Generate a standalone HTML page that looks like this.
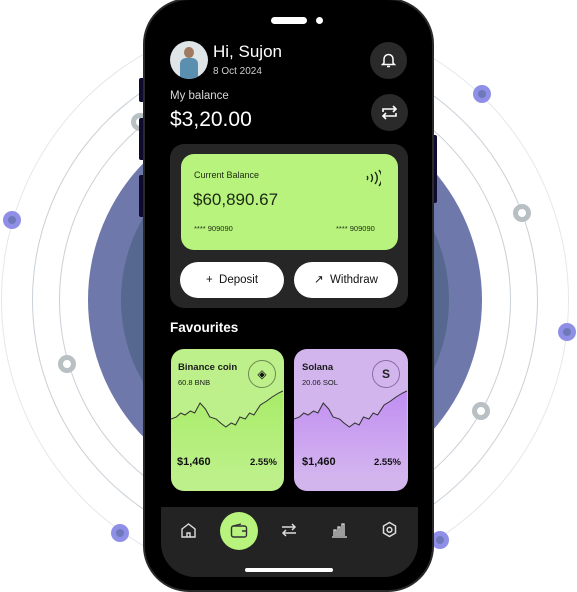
<!DOCTYPE html>
<html><head><style>
*{margin:0;padding:0;box-sizing:border-box}
body{width:577px;height:592px;overflow:hidden;background:#fff;position:relative;font-family:"Liberation Sans",sans-serif}
.a{position:absolute}
.ring{position:absolute;border-radius:50%;border:1px solid #c9d0d6}
.dot{position:absolute;width:18px;height:18px;border-radius:50%;background:#8f8fe8}
.dot::after{content:"";position:absolute;left:5px;top:5px;width:8px;height:8px;border-radius:50%;background:#6d79b8}
.gd{position:absolute;width:18px;height:18px;border-radius:50%;border:5px solid #b8c0c4;background:#fff}
.phone{position:absolute;left:143px;top:-2px;width:291px;height:594px;background:#000;border-radius:46px;border:2px solid #2a2a2a}
.w{color:#fff}
</style></head><body>
<div class="a" style="left:88px;top:103px;width:394px;height:394px;border-radius:50%;background:#6e78ab"></div>
<div class="a" style="left:121px;top:136px;width:328px;height:328px;border-radius:50%;background:#56688f"></div>
<div class="ring" style="left:59px;top:74px;width:452px;height:452px"></div>
<div class="ring" style="left:32px;top:47px;width:506px;height:506px"></div>
<div class="ring" style="left:1px;top:16px;width:568px;height:568px;border-color:#e4e8ea"></div>
<div class="dot" style="left:3px;top:211px"></div>
<div class="dot" style="left:111px;top:524px"></div>
<div class="dot" style="left:473px;top:85px"></div>
<div class="dot" style="left:558px;top:323px"></div>
<div class="dot" style="left:431px;top:531px"></div>
<div class="gd" style="left:131px;top:113px"></div>
<div class="gd" style="left:58px;top:355px"></div>
<div class="gd" style="left:513px;top:204px"></div>
<div class="gd" style="left:472px;top:402px"></div>
<div class="a" style="left:139px;top:78px;width:6px;height:24px;background:#0e0b2e;border-radius:2px"></div>
<div class="a" style="left:139px;top:118px;width:6px;height:42px;background:#0e0b2e;border-radius:2px"></div>
<div class="a" style="left:139px;top:175px;width:6px;height:42px;background:#0e0b2e;border-radius:2px"></div>
<div class="a" style="left:432px;top:135px;width:5px;height:68px;background:#0e0b2e;border-radius:2px"></div>
<div class="phone"></div>
<div class="a" style="left:271px;top:17px;width:36px;height:7px;border-radius:4px;background:#fff"></div>
<div class="a" style="left:316px;top:17px;width:7px;height:7px;border-radius:50%;background:#fff"></div>
<div class="a" style="left:170px;top:41px;width:38px;height:38px;border-radius:50%;background:#dfe4e6;overflow:hidden"><div class="a" style="left:10px;top:17px;width:18px;height:22px;background:#5a8fb0;border-radius:6px 6px 0 0"></div><div class="a" style="left:14px;top:6px;width:10px;height:11px;background:#a07a60;border-radius:50%"></div></div>
<div class="a w" style="left:213px;top:42px;font-size:17px">Hi, Sujon</div>
<div class="a" style="left:213px;top:66px;font-size:10px;color:#cfcfcf">8 Oct 2024</div>
<div class="a" style="left:370px;top:42px;width:37px;height:37px;border-radius:50%;background:#2a2a2a"><svg class="a" style="left:11px;top:10px" width="15" height="16" viewBox="0 0 15 16" fill="none" stroke="#fff" stroke-width="1.5"><path d="M3 11V7a4.5 4.5 0 0 1 9 0v4l1.5 1.5h-12z M6 14.5h3"/></svg></div>
<div class="a" style="left:371px;top:94px;width:37px;height:37px;border-radius:50%;background:#2a2a2a"><svg class="a" style="left:10px;top:11px" width="17" height="15" viewBox="0 0 17 15" fill="none" stroke="#fff" stroke-width="1.6"><path d="M2 7V4h13M12 1l3 3-3 3M15 8v3H2M5 14l-3-3 3-3"/></svg></div>
<div class="a" style="left:170px;top:90px;font-size:11.5px;color:#d8d8d8">My balance</div>
<div class="a w" style="left:170px;top:108px;font-size:21px">$3,20.00</div>
<div class="a" style="left:170px;top:144px;width:238px;height:164px;border-radius:14px;background:#262626"></div>
<div class="a" style="left:181px;top:154px;width:217px;height:96px;border-radius:13px;background:#b8f37e"></div>
<div class="a" style="left:194px;top:170px;font-size:9px;color:#1c2a10">Current Balance</div>
<div class="a" style="left:193px;top:190px;font-size:17px;color:#1c2a10">$60,890.67</div>
<div class="a" style="left:194px;top:224px;font-size:7.5px;color:#1c2a10">**** 909090</div>
<div class="a" style="left:336px;top:224px;font-size:7.5px;color:#1c2a10">**** 909090</div>
<svg class="a" style="left:365px;top:168px" width="16" height="20" viewBox="0 0 16 20" fill="none" stroke="#1c2a10" stroke-width="1.4"><path d="M2 8q1.5 2 0 4M6 6q3 4 0 8M10 4q4.5 6 0 12M14 2q6 8 0 16"/></svg>
<div class="a" style="left:180px;top:262px;width:104px;height:36px;border-radius:18px;background:#fff;font-size:11.5px;line-height:36px;text-align:center;color:#111">+&nbsp; Deposit</div>
<div class="a" style="left:294px;top:262px;width:104px;height:36px;border-radius:18px;background:#fff;font-size:11.5px;line-height:36px;text-align:center;color:#111">↗&nbsp; Withdraw</div>
<div class="a w" style="left:170px;top:320px;font-size:13.5px;font-weight:bold">Favourites</div>
<div class="a" style="left:171px;top:349px;width:113px;height:142px;border-radius:13px;background:#bdf08a;overflow:hidden">
<svg class="a" style="left:0;top:28px" width="113" height="114" viewBox="0 0 105 114" preserveAspectRatio="none"><defs><linearGradient id="g1" x1="0" y1="0" x2="0" y2="1"><stop offset="0" stop-color="#a8ec68"/><stop offset="1" stop-color="#bdf08a"/></linearGradient><linearGradient id="g2" x1="0" y1="0" x2="0" y2="1"><stop offset="0" stop-color="#c18ef2"/><stop offset="1" stop-color="#d3b5ee"/></linearGradient></defs><path d="M0 42l5-2 4-4 4 2 5-4 4 2 5-10 5 6 4 8 6 2 4 4 5 4 5-4 4 2 4-8 5 2 4-6 4 2 6-10 6-4 5-4 6-4 4-2v86H0z" fill="url(#g1)"/><path d="M0 42l5-2 4-4 4 2 5-4 4 2 5-10 5 6 4 8 6 2 4 4 5 4 5-4 4 2 4-8 5 2 4-6 4 2 6-10 6-4 5-4 6-4 4-2" fill="none" stroke="#333" stroke-width="1"/></svg>
<div class="a" style="left:7px;top:13px;font-size:9.5px;font-weight:bold;color:#1a1a1a">Binance coin</div>
<div class="a" style="left:7px;top:29px;font-size:7.5px;color:#1a1a1a">60.8 BNB</div>
<div class="a" style="left:77px;top:11px;width:28px;height:28px;border-radius:50%;border:1px solid #6b8a4e;text-align:center;line-height:27px;font-size:12px;color:#111">◈</div>
<div class="a" style="left:6px;top:107px;font-size:11px;font-weight:bold;color:#111">$1,460</div>
<div class="a" style="left:79px;top:108px;font-size:9.5px;font-weight:bold;color:#111">2.55%</div>
</div>
<div class="a" style="left:294px;top:349px;width:114px;height:142px;border-radius:13px;background:#d3b5ee;overflow:hidden">
<svg class="a" style="left:0;top:28px" width="114" height="114" viewBox="0 0 105 114" preserveAspectRatio="none"><path d="M0 42l5-2 4-4 4 2 5-4 4 2 5-10 5 6 4 8 6 2 4 4 5 4 5-4 4 2 4-8 5 2 4-6 4 2 6-10 6-4 5-4 6-4 4-2v86H0z" fill="url(#g2)"/><path d="M0 42l5-2 4-4 4 2 5-4 4 2 5-10 5 6 4 8 6 2 4 4 5 4 5-4 4 2 4-8 5 2 4-6 4 2 6-10 6-4 5-4 6-4 4-2" fill="none" stroke="#333" stroke-width="1"/></svg>
<div class="a" style="left:8px;top:13px;font-size:9.5px;font-weight:bold;color:#1a1a1a">Solana</div>
<div class="a" style="left:8px;top:29px;font-size:7.5px;color:#1a1a1a">20.06 SOL</div>
<div class="a" style="left:78px;top:11px;width:28px;height:28px;border-radius:50%;border:1px solid #8a6aa8;text-align:center;line-height:27px;font-size:12px;font-weight:bold;color:#222">S</div>
<div class="a" style="left:8px;top:107px;font-size:11px;font-weight:bold;color:#111">$1,460</div>
<div class="a" style="left:80px;top:108px;font-size:9.5px;font-weight:bold;color:#111">2.55%</div>
</div>
<div class="a" style="left:161px;top:507px;width:257px;height:70px;background:#232323;border-radius:0 0 34px 34px"></div>
<div class="a" style="left:220px;top:512px;width:38px;height:38px;border-radius:50%;background:#b8f37e"></div>
<svg class="a" style="left:180px;top:522px" width="17" height="17" viewBox="0 0 17 17" fill="none" stroke="#ddd" stroke-width="1.4"><path d="M2 7l6.5-5 6.5 5v8H2z M7 15v-4h3v4"/></svg>
<svg class="a" style="left:230px;top:523px" width="18" height="15" viewBox="0 0 18 15" fill="none" stroke="#333" stroke-width="1.4"><rect x="1.5" y="3" width="15" height="11" rx="2"/><path d="M3 3l8-2M12 8h4"/></svg>
<svg class="a" style="left:281px;top:522px" width="16" height="16" viewBox="0 0 16 16" fill="none" stroke="#ddd" stroke-width="1.5"><path d="M1 5h13M11 2l3 3-3 3M15 11H2M5 8l-3 3 3 3"/></svg>
<svg class="a" style="left:331px;top:521px" width="17" height="17" viewBox="0 0 17 17" fill="none" stroke="#ddd" stroke-width="1.3"><path d="M1 16h15M3 15V9h2v6M7 15V6h2v9M11 15V3h2v12"/></svg>
<svg class="a" style="left:381px;top:521px" width="17" height="18" viewBox="0 0 17 18" fill="none" stroke="#ddd" stroke-width="1.5"><path d="M8.5 1.5l6 3.5v7l-6 3.5-6-3.5v-7z"/><circle cx="8.5" cy="8.8" r="2.4"/></svg>
<div class="a" style="left:245px;top:568px;width:88px;height:4px;border-radius:2px;background:#fff"></div>
</body></html>
